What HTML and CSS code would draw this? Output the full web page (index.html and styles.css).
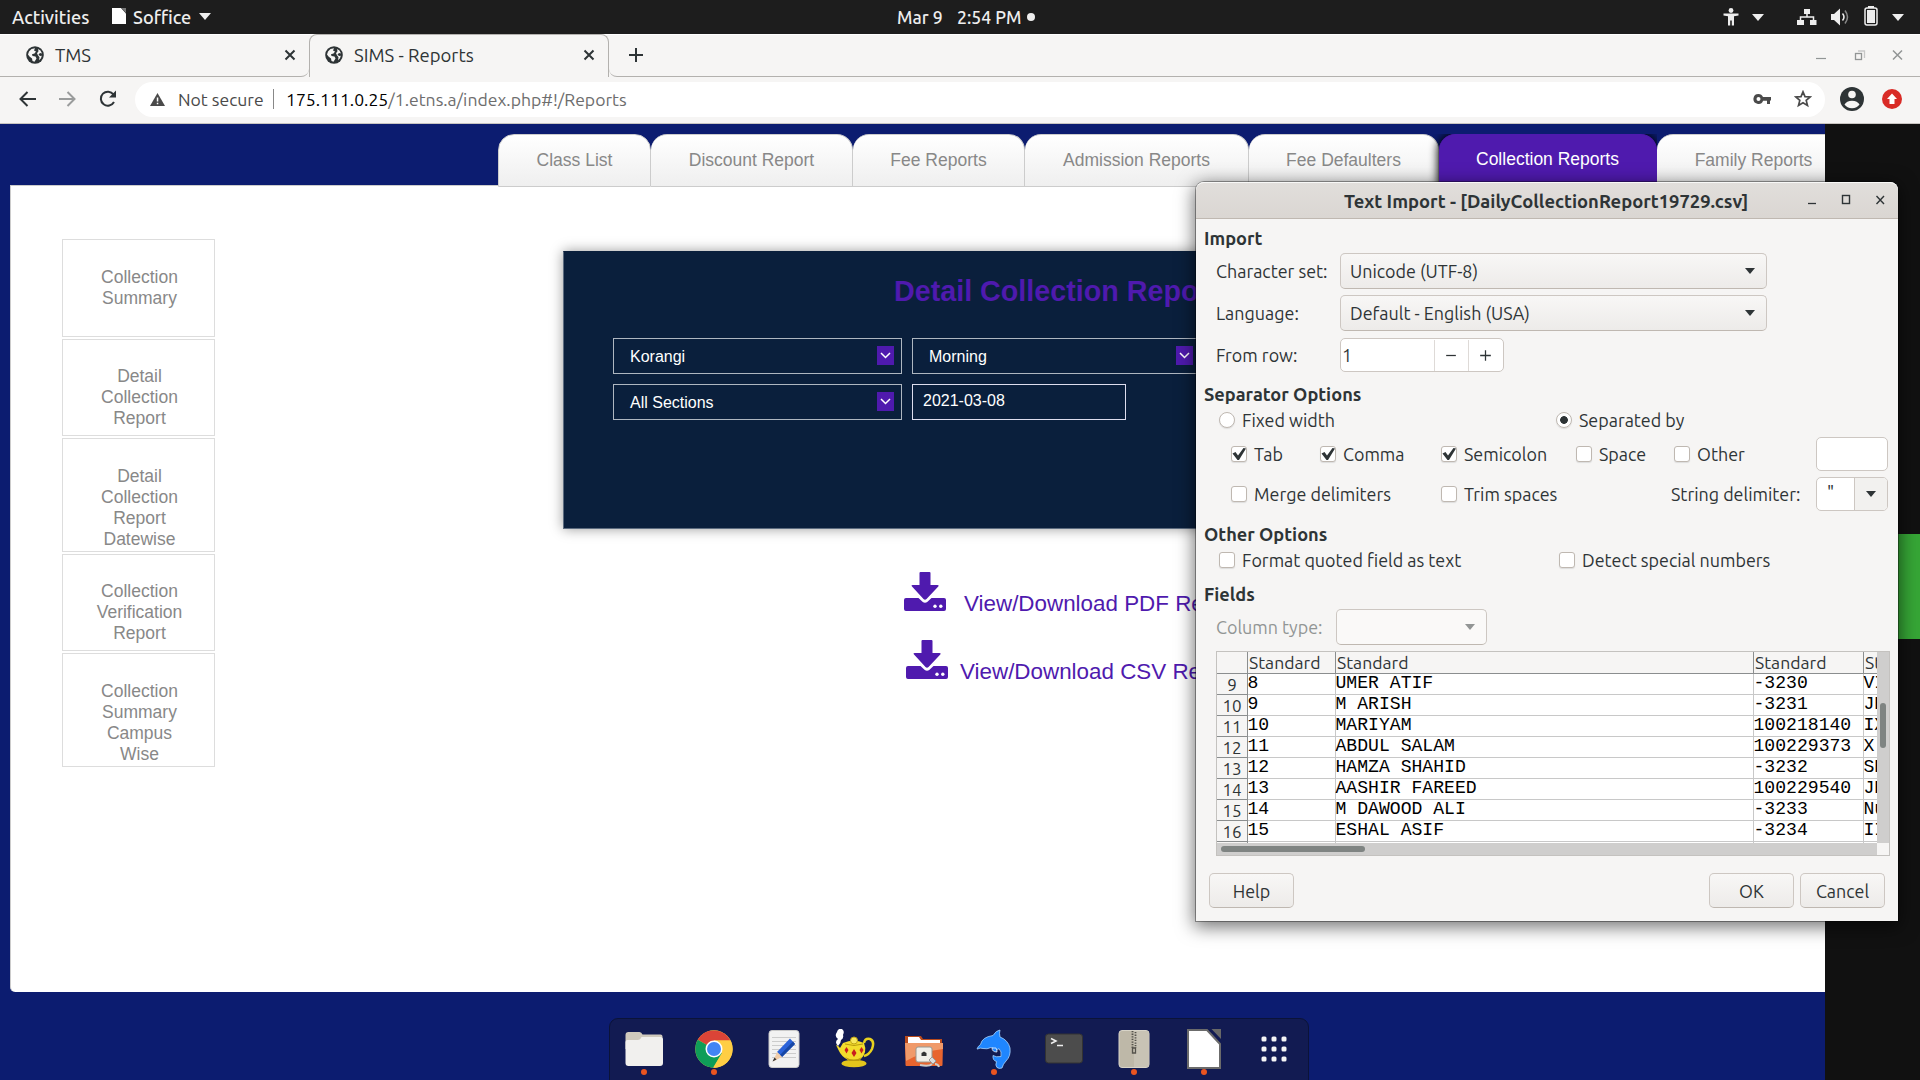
FILE: index.html
```html
<!DOCTYPE html>
<html lang="en">
<head>
<meta charset="utf-8">
<title>SIMS - Reports</title>
<link rel="stylesheet" href="styles.css">
</head>
<body>
<svg class="defs" width="0" height="0">
  <symbol id="globe" viewBox="0 0 18 18"><circle cx="9" cy="9" r="8.8" fill="#2e3436"/><path d="M3 5.5 5.5 3 9 2.2 8 4.5 10 5.5 8.5 7.5 6 8.2 6.500 10 9.500 10.500 10.500 12.500 8.500 15.800 6.500 15 6 12.500 3.500 10.500 2 8.500zM12 3l2.500 1.500 1.500 3-2-.500-1.500 1.500 1.500 1.500 1.800-.200-.800 2.500-2 2 .500-3-1.500-2-1-2 1.500-2z" fill="#f6f5f4"/></symbol>
  <symbol id="x" viewBox="0 0 12 12"><path d="M1.500 1.500l9 9M10.500 1.500l-9 9" fill="none" stroke="currentColor" stroke-width="2"/></symbol>
  <symbol id="caret" viewBox="0 0 12 7"><path d="M0 0h12L6 7z" fill="currentColor"/></symbol>
  <symbol id="check" viewBox="0 0 16 16"><path d="M1.500 7.500 4.500 6l2.500 3.500L12.500 2 15 2.500 8 14H6.500z" fill="#2e3436"/></symbol>
  <symbol id="chev" viewBox="0 0 17 19"><path d="M4 7l4.500 4.500L13 7" fill="none" stroke="#fff" stroke-width="1.500"/></symbol>
  <symbol id="dl" viewBox="0 0 42 39"><path d="M16.500 0h9q1 0 1 1v12h7q2 0 .800 1.500L22.500 27q-1.500 1.300-3 0L8 14.500Q6.700 13 8.500 13h7V1q0-1 1-1z" fill="#4f1aae"/><path d="M2 26h12.500l4 3.800q2.500 2 5 0L27.500 26H40q2 0 2 2v9q0 2-2 2H2q-2 0-2-2v-9q0-2 2-2z" fill="#4f1aae"/><circle cx="31" cy="34.200" r="1.700" fill="#fff"/><circle cx="36.800" cy="34.200" r="1.700" fill="#fff"/></symbol>
</svg>

<header class="topbar">
  <span class="activities">Activities</span>
  <svg class="doc" width="14" height="16" viewBox="0 0 14 16"><path d="M0 0h9l5 5.500V16H0z" fill="#fff"/><path d="M9.500 0H14v5z" fill="#777"/></svg>
  <span class="soffice">Soffice</span>
  <svg class="app-caret" width="12" height="7"><use href="#caret"/></svg>
  <span class="date">Mar 9</span><span class="time">2:54 PM</span><i class="notify"></i>
  <div class="tray">
    <svg width="16" height="18" viewBox="0 0 16 18"><circle cx="8" cy="2.500" r="2.400" fill="#eee"/><path d="M.500 5.500h15v2l-4.500.800V17.500H8.800v-5H7.200v5H5V8.300L.500 7.500z" fill="#eee"/></svg>
    <svg class="t-caret1" width="12" height="7"><use href="#caret"/></svg>
    <svg class="t-net" width="20" height="18" viewBox="0 0 20 18"><path d="M7 1h6v5H7zM0 12h7v5H0zM13 12h6.500v5H13z" fill="#eee"/><path d="M10 5v4M3.500 12V9h13v3" stroke="#eee" stroke-width="1.500" fill="none"/></svg>
    <svg class="t-vol" width="19" height="18" viewBox="0 0 19 18"><path d="M0 6h3l6-5.500v17L3 12H0z" fill="#eee"/><path d="M11.500 5.500q3 3.500 0 7" stroke="#eee" stroke-width="1.500" fill="none"/><path d="M14 2.500q5 6.500 0 13" stroke="#888" stroke-width="1.500" fill="none"/></svg>
    <svg class="t-bat" width="14" height="20" viewBox="0 0 14 20"><rect x="1" y="2" width="12" height="17" rx="2" fill="none" stroke="#eee" stroke-width="1.500"/><path d="M4 0h6v2H4zM3 4h8v13H3z" fill="#eee"/></svg>
    <svg class="t-caret2" width="12" height="7"><use href="#caret"/></svg>
  </div>
</header>

<div class="tabstrip">
  <div class="btab"><svg width="18" height="18"><use href="#globe"/></svg><span class="tms">TMS</span><svg class="tclose" width="12" height="12"><use href="#x"/></svg></div>
  <div class="btab active"><svg width="18" height="18"><use href="#globe"/></svg><span class="sims">SIMS - Reports</span><svg class="tclose" width="12" height="12"><use href="#x"/></svg></div>
  <div class="brest">
    <svg width="16" height="16" viewBox="0 0 16 16"><path d="M8 1v14M1 8h14" stroke="#2e3436" stroke-width="2"/></svg>
    <svg class="wc" width="88" height="14" viewBox="0 0 88 14"><path d="M0 10.500h10" stroke="#929595" stroke-width="1.200"/><rect x="39.500" y="5.500" width="6" height="6" fill="none" stroke="#929595" stroke-width="1.300"/><path d="M42 3h6.500v7" fill="none" stroke="#c8c8c8" stroke-width="1.300"/><path d="M77 2.500l9 9M86 2.500l-9 9" stroke="#929595" stroke-width="1.500"/></svg>
  </div>
</div>

<div class="toolbar">
  <svg width="104" height="20" viewBox="0 0 104 20"><path d="M18 10H3M9.500 3L2.500 10l7 7" fill="none" stroke="#2e3436" stroke-width="2"/><path d="M41 10h15M49.500 3l7 7-7 7" fill="none" stroke="#9a9c9c" stroke-width="2"/><path d="M95.500 5.500A7 7 0 1 0 96 13" fill="none" stroke="#2e3436" stroke-width="2"/><path d="M98 1.500V8.500H91z" fill="#2e3436"/></svg>
  <div class="omnibox">
    <svg width="15" height="13" viewBox="0 0 15 13"><path d="M7.500 0 15 13H0z" fill="#4a4a4a"/><path d="M6.800 4.500h1.500v4H6.800zM6.800 9.700h1.500v1.500H6.800z" fill="#fff"/></svg>
    <span class="notsec">Not secure</span><i class="bar"></i><span class="url"><b>175.111.0.25</b>/1.etns.a/index.php#!/Reports</span>
    <svg class="key" width="18" height="12" viewBox="0 0 18 12"><path d="M5.500 1a5 5 0 1 0 4.600 6.800H14V11h3V7.500h1V4H10A5 5 0 0 0 5.500 1zm0 3a2 2 0 1 1 0 4 2 2 0 0 1 0-4z" fill="#4a4a4a"/></svg>
    <svg class="star" width="18" height="18" viewBox="0 0 18 18"><path d="M9 1.800l2 4.800 5.200.400-4 3.400 1.300 5.100L9 12.800l-4.500 2.700 1.300-5.100-4-3.400L7 6.600z" fill="none" stroke="#4a4a4a" stroke-width="1.700"/></svg>
  </div>
  <svg class="avatar" width="24" height="24" viewBox="0 0 24 24"><circle cx="12" cy="12" r="12" fill="#2e3436"/><circle cx="12" cy="7.500" r="3.800" fill="#f6f5f4"/><path d="M4.500 17.500q2-3.800 7.500-3.800t7.500 3.800q-2.500 3.700-7.500 3.700t-7.500-3.700z" fill="#f6f5f4"/></svg>
  <svg class="update" width="20" height="20" viewBox="0 0 20 20"><circle cx="10" cy="10" r="10" fill="#d92b26"/><path d="M10 4.500l5 5.500h-2.500v5h-5v-5H5z" fill="#fff"/></svg>
</div>

<div class="viewport">
  <main class="page">
    <nav class="tabs">
      <a class="w1">Class List</a><a class="w2">Discount Report</a><a class="w3">Fee Reports</a><a class="w4">Admission Reports</a><a class="w5">Fee Defaulters</a><a class="w6 on">Collection Reports</a><a class="w7">Family Reports</a>
    </nav>
    <section class="panel">
      <aside class="side">
        <a class="s1">Collection<br>Summary</a>
        <a>Detail<br>Collection<br>Report</a>
        <a class="tall">Detail<br>Collection<br>Report<br>Datewise</a>
        <a>Collection<br>Verification<br>Report</a>
        <a class="tall">Collection<br>Summary<br>Campus<br>Wise</a>
      </aside>
      <div class="content">
        <div class="card">
          <h1>Detail Collection Report</h1>
          <div class="filters">
            <div class="sel"><span>Korangi</span><svg width="17" height="19"><use href="#chev"/></svg></div>
            <div class="sel"><span>Morning</span><svg width="17" height="19"><use href="#chev"/></svg></div>
            <div class="sel"><span>All Sections</span><svg width="17" height="19"><use href="#chev"/></svg></div>
            <div class="datebox">2021-03-08</div>
          </div>
        </div>
        <div class="dl pdf"><svg width="42" height="39"><use href="#dl"/></svg><span>View/Download PDF Report</span></div>
        <div class="dl csv"><svg width="42" height="39"><use href="#dl"/></svg><span>View/Download CSV Report</span></div>
      </div>
    </section>
  </main>
  <div class="desk"><div class="green"></div></div>
</div>

<div class="dialog">
  <div class="dtitle"><span>Text Import - [DailyCollectionReport19729.csv]</span>
    <svg width="78" height="14" viewBox="0 0 78 14"><path d="M1 10.500h8" stroke="#2e3436" stroke-width="1.300"/><rect x="35.500" y="2.500" width="7" height="8" fill="none" stroke="#2e3436" stroke-width="1.400"/><path d="M69.500 3l7.500 8M77 3l-7.500 8" stroke="#2e3436" stroke-width="1.400"/></svg>
  </div>
  <h2 class="h-import">Import</h2>
  <div class="frow"><label class="ls-char">Character set:</label><div class="combo">Unicode (UTF-8)<svg width="10" height="6"><use href="#caret"/></svg></div></div>
  <div class="frow mt6"><label>Language:</label><div class="combo">Default - English (USA)<svg width="10" height="6"><use href="#caret"/></svg></div></div>
  <div class="frow mt7 h33"><label>From row:</label><div class="spin"><span>1</span><svg width="34" height="31" viewBox="0 0 34 31"><path d="M11.500 15.500h10" stroke="#2e3436" stroke-width="1.300"/></svg><svg width="34" height="31" viewBox="0 0 34 31"><path d="M11.500 15.500h11M17 10v11" stroke="#2e3436" stroke-width="1.300"/></svg></div></div>
  <h2 class="mt11 hs">Separator Options</h2>
  <div class="radios"><i class="radio"></i><label>Fixed width</label><i class="radio on"></i><label>Separated by</label></div>
  <div class="checks">
    <i class="cb"><svg width="16" height="16"><use href="#check"/></svg></i><label>Tab</label>
    <i class="cb"><svg width="16" height="16"><use href="#check"/></svg></i><label>Comma</label>
    <i class="cb"><svg width="16" height="16"><use href="#check"/></svg></i><label>Semicolon</label>
    <i class="cb"></i><label>Space</label>
    <i class="cb"></i><label>Other</label>
    <div class="entry"></div>
  </div>
  <div class="merge">
    <i class="cb"></i><label>Merge delimiters</label><i class="cb"></i><label>Trim spaces</label><label>String delimiter:</label>
    <div class="entry split"><span>"</span><b><svg width="10" height="6"><use href="#caret"/></svg></b></div>
  </div>
  <h2 class="mt11 ho">Other Options</h2>
  <div class="other"><i class="cb"></i><label>Format quoted field as text</label><i class="cb"></i><label>Detect special numbers</label></div>
  <h2 class="mt8">Fields</h2>
  <div class="frow coltype"><label>Column type:</label><div class="combo off"><svg width="10" height="6"><use href="#caret"/></svg></div></div>
  <div class="grid">
    <div class="gbody">
      <div class="ghead"><span></span><span>Standard</span><span>Standard</span><span>Standard</span><span>Standard</span></div>
      <div class="grow"><b>9</b><span>8</span><span>UMER ATIF</span><span>-3230</span><span>VII</span></div>
      <div class="grow"><b>10</b><span>9</span><span>M ARISH</span><span>-3231</span><span>JR</span></div>
      <div class="grow"><b>11</b><span>10</span><span>MARIYAM</span><span>100218140</span><span>IX</span></div>
      <div class="grow"><b>12</b><span>11</span><span>ABDUL SALAM</span><span>100229373</span><span>X</span></div>
      <div class="grow"><b>13</b><span>12</span><span>HAMZA SHAHID</span><span>-3232</span><span>SR</span></div>
      <div class="grow"><b>14</b><span>13</span><span>AASHIR FAREED</span><span>100229540</span><span>JR</span></div>
      <div class="grow"><b>15</b><span>14</span><span>M DAWOOD ALI</span><span>-3233</span><span>Nur</span></div>
      <div class="grow"><b>16</b><span>15</span><span>ESHAL ASIF</span><span>-3234</span><span>III</span></div>
      <div class="grow"><b></b><span></span><span></span><span></span><span></span></div>
    </div>
    <div class="vscroll"><i></i></div>
    <div class="hscroll"><i></i></div>
    <div class="corner"></div>
  </div>
  <div class="buttons"><button>Help</button><button class="ok">OK</button><button>Cancel</button></div>
</div>

<div class="dock">
  <div class="app run"><svg width="40" height="42" viewBox="0 0 40 42"><path d="M1.500 6q0-3 3-3h11q2 0 3 2.500h18q2 0 2 2V20h-37z" fill="#d0cabd"/><path d="M1.500 13q0-2 2-2h10q3 0 4-3h19q2.500 0 2.500 2.500V34q0 3-3 3H4.500q-3 0-3-3z" fill="#f1f0ee"/></svg></div>
  <div class="app run"><svg width="40" height="42" viewBox="0 0 40 42"><circle cx="20" cy="20" r="18.700" fill="#ffce44"/><path d="M20 20 3.800 10.700A18.700 18.700 0 0 1 36.500 11.500H20z" fill="#db4437"/><path d="M20 20 3.800 10.700A18.700 18.700 0 0 0 19 38.700L28 24z" fill="#0f9d58"/><path d="M20 11.500h16.500A18.700 18.700 0 0 1 19.500 38.700L28 24z" fill="#ffce44"/><circle cx="20" cy="20" r="8.500" fill="#fff"/><circle cx="20" cy="20" r="7" fill="#4285f4"/></svg></div>
  <div class="app"><svg width="40" height="42" viewBox="0 0 40 42"><rect x="5" y="1.500" width="30" height="37" rx="3" fill="#f2f2f2" stroke="#c9c9c9"/><path d="M8 8.500h24M8 12.500h24M8 16.500h24M8 20.500h24M8 24.500h24M8 28.500h24" stroke="#ccc"/><path d="M26 9.500l5 5.500-13 13-5-5z" fill="#2a62d9"/><path d="M29 12.500l2 2.500-13 13-2-2z" fill="#1747a5"/><path d="M13 23l5 5-9 4.500z" fill="#f2cda8"/><path d="M10.500 28.500l2 2-4 2z" fill="#333"/></svg></div>
  <div class="app"><svg width="42" height="42" viewBox="0 0 42 42"><ellipse cx="21" cy="34.500" rx="12.500" ry="3.800" fill="#e3c51c"/><path d="M31 14q1-5 6-4 5 2 2 10-3 6-8 7" fill="none" stroke="#e8d11f" stroke-width="2.500"/><path d="M3 16q2 0 4 3l3-5q11-5 21 0 4 10-4 17H15Q8 27 6 22z" fill="#f3dc2c"/><path d="M12 28q9 5 17 0l-3 4H16z" fill="#b99a0e"/><circle cx="21" cy="11.500" r="3.500" fill="#f8e85c" stroke="#c2a514"/><path d="M12 15q9 3 18 0" fill="none" stroke="#b99a0e"/><path d="M21 20l2.500 4-2.500 4-2.500-4zM13.500 18l2 3-2 3.500-2-3.500zM28.500 18l2 3-2 3.500-2-3.500z" fill="#c81e1e"/><path d="M5 17q-4-4 0-7-4-3-1-7 1-4 5-3 3 2 1 6 1 3-2 5 0 3-3 6z" fill="#fff"/></svg></div>
  <div class="app"><svg width="40" height="42" viewBox="0 0 40 42"><path d="M1 7h16l2 3h19v10H1z" fill="#b84a1c"/><path d="M4 8h11l2 3h19v4H4z" fill="#fff"/><path d="M1 14h38l-.500 22q0 1-1 1h-35q-1 0-1-1z" fill="#e8652f"/><path d="M1 14h38v6Q20 22 2 32z" fill="#f09a6a"/><rect x="12" y="18" width="16" height="15" rx="2" fill="#f1efe8" stroke="#9a9890"/><path d="M17.500 24l2.500-1.500 2.500 1.500v3h-5z" fill="#333"/><path d="M25 31l3-3 4 4-3 3z" fill="#ddd" stroke="#999"/><path d="M16 36q9 2 12-1M31 35q3 0 4 3" stroke="#ccc" stroke-width="2" fill="none"/></svg></div>
  <div class="app run"><svg width="40" height="42" viewBox="0 0 40 42"><path d="M3 20Q4 17 6.500 15.500 8 8 19 6.500 22 1.500 26 1q-1 3 0 7 8 3 10 11 1 8-4 13-3 3-4 7-3 1-5-.500-2-2-.500-6-4-1-3.500-6 3 2 8 1 1-5-2-8-1 2-4 1-2-2-4-2-4 2-8 1-3-1-5.500.500z" fill="#1f86ff" stroke="#a8d4ff" stroke-width=".800"/><path d="M18 19q0 4 5 4 0-2-1-4z" fill="#1f86ff" stroke="#fff" stroke-width=".700"/></svg></div>
  <div class="app"><svg width="40" height="42" viewBox="0 0 40 42"><rect x="1.500" y="5" width="37" height="29" rx="3" fill="#4c4c4c" stroke="#323232"/><path d="M7 9.500l5 2.500-5 2.500M13 16.500h6" fill="none" stroke="#eee" stroke-width="1.500"/></svg></div>
  <div class="app run"><svg width="40" height="42" viewBox="0 0 40 42"><rect x="5" y="1.500" width="30" height="37" rx="3" fill="#beb8a8" stroke="#d8d4c8"/><path d="M20 2h14.500v36H20z" fill="#c8c3b5"/><path d="M18.500 2v17M21.500 3v16" stroke="#55534c" stroke-width="1.800" stroke-dasharray="1.300 1.300"/><path d="M18.500 19h3v5h-3z" fill="none" stroke="#55534c" stroke-width="1.300"/></svg></div>
  <div class="app run"><svg width="40" height="42" viewBox="0 0 40 42"><path d="M4 1h19l13 14v24H4z" fill="#fff" stroke="#6b6b6b" stroke-width="2"/><path d="M27.500 0H37v10z" fill="#686868"/></svg></div>
  <div class="app"><svg width="40" height="42" viewBox="0 0 40 42"><g fill="#f4f4f4"><rect x="7.500" y="7.500" width="5" height="5" rx="1.500"/><rect x="17.500" y="7.500" width="5" height="5" rx="1.500"/><rect x="27.500" y="7.500" width="5" height="5" rx="1.500"/><rect x="7.500" y="17.500" width="5" height="5" rx="1.500"/><rect x="17.500" y="17.500" width="5" height="5" rx="1.500"/><rect x="27.500" y="17.500" width="5" height="5" rx="1.500"/><rect x="7.500" y="27.500" width="5" height="5" rx="1.500"/><rect x="17.500" y="27.500" width="5" height="5" rx="1.500"/><rect x="27.500" y="27.500" width="5" height="5" rx="1.500"/></g></svg></div>
</div>
</body>
</html>
```
FILE: styles.css
```css
* { box-sizing: border-box; }
body {
  margin: 0; width: 1920px; height: 1080px; overflow: hidden; position: relative;
  font-family: Ubuntu, "Noto Sans", sans-serif; font-size: 17.600px; color: #2e3436; background: #111;
}
svg { display: block; flex: none; }
.defs { position: absolute; }
span, label, a, button, h1, h2 { white-space: nowrap; }

/* Desktop top bar */
.topbar { height: 34px; background: #1d1d1d; color: #eee; display: flex; align-items: center; padding-left: 12px; font-weight: 500; }
.activities { width: 100px; font-size: 18.200px; }
.doc { margin-top: -2px; }
.soffice { margin-left: 7px; width: 65px; font-size: 18.200px; }
.app-caret { margin-left: 1px; margin-top: -1px; }
.date { margin-left: 686px; width: 60px; }
.time { width: 70px; }
.notify { width: 8px; height: 8px; border-radius: 4px; background: #eee; }
.tray { margin-left: 688px; display: flex; align-items: center; }
.t-caret1 { margin-left: 13px; }
.t-net { margin-left: 33px; }
.t-vol { margin-left: 14px; }
.t-bat { margin-left: 14px; margin-top: -2px; }
.t-caret2 { margin-left: 14px; }

/* Browser chrome */
.tabstrip { height: 43px; background: #f6f5f4; display: flex; border-top: 1px solid #fff; font-size: 18.500px; }
.btab { width: 309px; padding: 0 13px 2px 26px; display: flex; align-items: center; border-bottom: 1px solid #b3b1ae; }
.btab:first-child { border-bottom-right-radius: 8px; }
.btab.active { width: 300px; padding-left: 15px; margin-top: -1px; border: 1px solid #b3b1ae; border-bottom: 0; border-radius: 8px 8px 0 0; }
.btab span { margin-left: 11px; }
.tclose { margin-left: auto; }
.brest { flex: 1; display: flex; align-items: center; padding: 0 16px 2px 19px; border-bottom: 1px solid #b3b1ae; border-bottom-left-radius: 8px; }
.wc { margin-left: auto; }
.toolbar { height: 47px; background: #f6f5f4; display: flex; align-items: center; border-bottom: 1px solid #c9c5c1; padding: 0 17px 2px 18px; }
.omnibox { width: 1690px; height: 35px; margin-left: 13px; border-radius: 18px; background: #fff; display: flex; align-items: center; padding: 0 13px 0 15px; color: #4a4a4a; }
.notsec { margin-left: 13px; width: 91px; }
.bar { width: 1px; height: 20px; background: #888; margin-left: 4px; }
.url { margin-left: 12px; color: #6d6d6d; }
.url b { color: #000; font-weight: 400; }
.key { margin-left: auto; }
.star { margin-left: 23px; }
.avatar { margin-left: 15px; }
.update { margin-left: 18px; }

/* Web page */
.viewport { height: 956px; display: flex; font-family: "Liberation Sans", Arial, sans-serif; }
.page { width: 1825px; background: #0c1c70; overflow: hidden; }
.tabs { display: flex; padding: 10px 0 0 498px; width: 2100px; position: relative; z-index: 1; margin-bottom: -2px; }
.tabs a { height: 53px; border: 1px solid #ccc; border-left-width: 0; border-radius: 16px 16px 0 0; background: linear-gradient(#fff, #efefef); color: #888; font-size: 17.500px; line-height: 51px; text-align: center; }
.tabs .w1 { width: 153px; border-left-width: 1px; }
.w2 { width: 202px; } .w3 { width: 172px; } .w4 { width: 224px; } .w5 { width: 190px; } .w6 { width: 218px; } .w7 { width: 194px; }
.tabs .on { background: #4f1aae; border-color: #4f1aae; color: #fff; line-height: 49px; box-shadow: 0 0 10px 1px #000; clip-path: inset(0 0 0 -14px); }
.panel { height: 807px; margin-left: 10px; background: #fff; border: solid #ccc; border-width: 1px 0 0 1px; border-radius: 0 0 0 5px; display: flex; }
.side { padding: 53px 0 0 51px; width: 552px; display: flex; flex-direction: column; gap: 2px; }
.side a { width: 153px; height: 97px; border: 1px solid #ddd; padding: 26px 0 0 2px; text-align: center; color: #888; font-size: 17.500px; line-height: 21px; }
.side .s1 { height: 98px; padding-top: 27px; }
.side .tall { height: 114px; padding-top: 27px; }
.content { padding-top: 65px; }
.card { width: 1010px; height: 278px; background: #0a1f3c; border: 1px solid #5d6c80; border-top-color: #0a1f3c; box-shadow: 0 0 12px rgba(0,0,0,.4); padding: 21px 0 0 49px; }
.card h1 { margin: 0 0 0 281px; color: #4f1aae; font-size: 28.700px; line-height: 36px; }
.filters { margin-top: 29px; display: grid; grid-template-columns: 289px 289px; gap: 10px; color: #fff; font-size: 16px; }
.sel { height: 36px; border: 1px solid #aeb6c0; display: flex; align-items: center; padding: 0 7px 0 16px; }
.sel span { margin-top: 2px; }
.sel svg { background: #4f1aae; margin-left: auto; margin-top: -1px; }
.datebox { width: 214px; height: 36px; border: 1px solid #dde; padding-left: 10px; line-height: 32px; }
.dl { display: flex; color: #4f1aae; font-size: 22.400px; }
.dl span { line-height: 26px; margin-top: 19px; }
.pdf { padding-left: 341px; margin-top: 43px; height: 68px; gap: 18px; }
.csv { padding-left: 343px; gap: 12px; }
.desk { width: 95px; background: #111; padding-top: 410px; }
.green { height: 105px; background: #36a636; }

/* Text import window */
.dialog { position: absolute; z-index: 2; left: 1196px; top: 182px; width: 702px; height: 739px; background: #f6f5f4; border-radius: 8px 8px 0 0; box-shadow: 0 0 0 1px rgba(0,0,0,.35), 0 4px 18px 2px rgba(0,0,0,.55); font-size: 17.900px; }
.dtitle { height: 37px; border-radius: 8px 8px 0 0; border-bottom: 1px solid #bfb8b1; border-top: 1px solid #f8f8f7; background: linear-gradient(#e1dedb, #dad6d2); display: flex; align-items: center; font-weight: 700; font-size: 18.400px; padding: 0 13px 0 148px; }
.dtitle svg { margin-left: auto; margin-top: -1px; }
.dialog h2 { margin: 0 0 0 8px; font-size: 18.200px; line-height: 24px; height: 24px; }
.dialog .h-import { padding-top: 7px; height: 34px; }
.mt6 { margin-top: 6px; } .mt7 { margin-top: 7px; }
.dialog .mt11 { margin-top: 11px; } .dialog .mt8 { margin-top: 8px; }
.frow { height: 36px; padding-left: 20px; display: grid; grid-template-columns: 124px auto; align-items: center; }
.frow.h33 { height: 33px; }
.frow label, .combo { line-height: 22px; }
.combo { width: 427px; height: 36px; border: 1px solid #cdc7c2; border-bottom-color: #bfb8b1; border-radius: 5px; background: linear-gradient(#f8f7f6, #edebe9); display: flex; align-items: center; padding: 0 11px 0 9px; }
.combo svg { margin-left: auto; }
.spin { width: 164px; height: 34px; border: 1px solid #cdc7c2; border-radius: 5px; background: #fff; display: flex; align-items: center; }
.spin span { width: 93px; padding-left: 1px; }
.spin svg { border-left: 1px solid #dedad7; }
.radios { height: 28px; padding-left: 23px; display: grid; grid-template-columns: 23px 314px 23px auto; align-items: center; }
.radio { width: 16px; height: 16px; margin-top: -1px; border-radius: 8px; border: 1px solid #bfb8b1; background: #fff; box-shadow: 0 1px 1px #ddd; }
.radio.on { background: radial-gradient(circle, #2e3436 3.500px, #fff 4.200px); }
.cb { width: 16px; height: 16px; margin-top: -1px; border: 1px solid #bfb8b1; border-radius: 3px; background: #fff; box-shadow: 0 1px 1px #ddd; }
.cb svg { margin: -1px 0 0 -1px; }
.checks { height: 34px; margin-top: 3px; padding-left: 35px; display: grid; grid-template-columns: 23px 66px 23px 98px 23px 112px 23px 75px 23px 119px 72px; align-items: center; }
.merge { height: 34px; margin-top: 6px; padding-left: 35px; display: grid; grid-template-columns: 23px 187px 23px 207px 145px 72px; align-items: center; }
.entry { height: 34px; border: 1px solid #cdc7c2; border-radius: 5px; background: #fff; }
.split { display: flex; overflow: hidden; }
.split span { width: 37px; padding: 4px 0 0 10px; }
.split b { flex: 1; display: flex; align-items: center; justify-content: center; background: #f2f1ef; border-left: 1px solid #cdc7c2; }
.other { height: 28px; padding-left: 23px; display: grid; grid-template-columns: 23px 317px 23px auto; align-items: center; }
.coltype { margin-top: 3px; grid-template-columns: 120px auto; color: #929595; }
.combo.off { width: 151px; background: #faf9f8; }
.grid { margin: 6px 0 0 20px; width: 674px; height: 205px; border: 1px solid #c4c2bf; display: grid; grid-template: 191px 12px / 660px 12px; }
.gbody { overflow: hidden; background: #fff; }
.ghead, .grow { display: grid; grid-template-columns: 31px 88px 418px 110px 100px; }
.ghead { height: 22px; grid-template-rows: 21px; background: #f6f5f4; border-bottom: 1px solid #8b8e8f; line-height: 21px; font-size: 17.600px; }
.ghead span { border-right: 1px solid #8b8e8f; padding-left: 1px; }
.grow { height: 21px; grid-template-rows: 21px; font-family: "Liberation Mono", monospace; font-size: 18.100px; color: #000; }
.grow span { border-right: 1px solid #c8c8c8; border-bottom: 1px solid #c8c8c8; line-height: 18px; text-indent: -.500px; }
.grow b { font: 400 17px/21px Ubuntu, "Noto Sans", sans-serif; color: #2e3436; text-align: center; background: #f6f5f4; border-right: 1px solid #8b8e8f; border-bottom: 1px solid #8b8e8f; }
.vscroll { background: #cfcecd; padding: 51px 0 0 3px; }
.vscroll i { display: block; width: 6px; height: 45px; border-radius: 3px; background: #7f8482; }
.hscroll { background: #cfcecd; padding: 3px 0 0 4px; }
.hscroll i { display: block; width: 144px; height: 6px; border-radius: 3px; background: #7f8482; }
.buttons { display: flex; gap: 6px; margin: 17px 13px 0 13px; }
.buttons button { width: 85px; height: 35px; padding: 0; font: inherit; color: inherit; border: 1px solid #cdc7c2; border-bottom-color: #bfb8b1; border-radius: 5px; background: linear-gradient(#f8f7f6, #edebe9); }
.buttons .ok { margin-left: auto; }

/* Dock */
.dock { position: absolute; z-index: 2; left: 609px; top: 1018px; width: 700px; height: 63px; border: 1px solid #0b1338; border-radius: 9px 9px 0 0; background: #121b52; display: grid; grid-template-columns: repeat(10, 70px); }
.app { display: flex; flex-direction: column; align-items: center; padding-top: 10px; margin-left: -2px; }
.run::after { content: ""; width: 6px; height: 6px; border-radius: 3px; background: #e95420; margin-top: -2px; }
```
